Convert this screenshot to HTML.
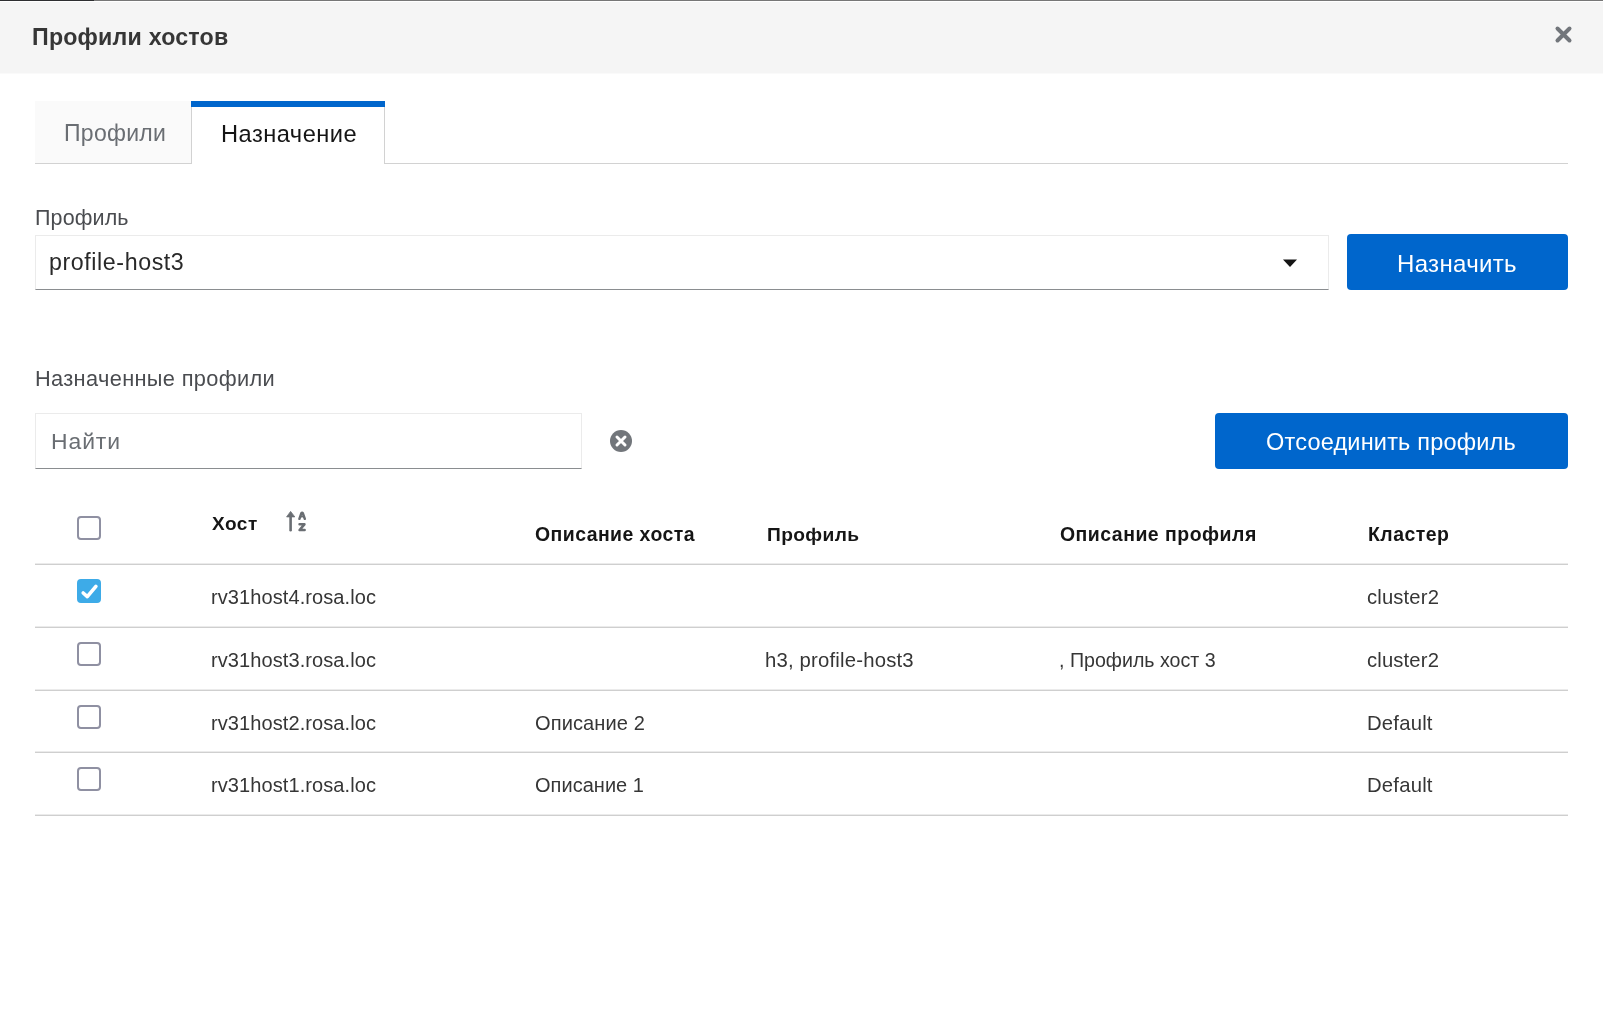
<!DOCTYPE html>
<html><head><meta charset="utf-8">
<style>
html,body{margin:0;padding:0;background:#fff;width:1603px;height:1034px;overflow:hidden;}
body{position:relative;font-family:"Liberation Sans",sans-serif;}
.a{position:absolute;box-sizing:border-box;}
.t{position:absolute;white-space:nowrap;line-height:1.117;will-change:transform;}
.hl{position:absolute;left:35px;width:1533px;height:1px;background:#cfcfcf;box-shadow:0 -1px 0 #ebebeb;}
.cb{position:absolute;left:77px;width:24px;height:24px;box-sizing:border-box;border:2px solid #8f90a2;border-radius:4px;background:#fff;}
</style></head><body>
<!-- top line -->
<div class="a" style="left:0;top:0;width:94px;height:1px;background:#2e2f31"></div>
<div class="a" style="left:94px;top:0;width:1509px;height:1px;background:#777"></div>
<!-- header -->
<div class="a" style="left:0;top:2px;width:1603px;height:71px;background:#f5f5f5"></div>
<div class="a" style="left:0;top:73px;width:1603px;height:1px;background:#fafafa"></div>
<svg class="a" style="left:1553px;top:24px" width="21" height="21" viewBox="0 0 21 21">
  <path d="M4.5 4.5 L16.5 16.5 M16.5 4.5 L4.5 16.5" stroke="#72767b" stroke-width="4" stroke-linecap="round"/>
</svg>
<!-- tabs -->
<div class="a" style="left:35px;top:101px;width:157px;height:63px;background:#fafafa;border-right:1px solid #d2d2d2;border-bottom:1px solid #d2d2d2"></div>
<div class="a" style="left:191px;top:101px;width:194px;height:63px;background:#fff;border-left:1px solid #d2d2d2;border-right:1px solid #d2d2d2"></div>
<div class="a" style="left:191px;top:101px;width:194px;height:6px;background:#06c"></div>
<div class="a" style="left:384px;top:163px;width:1184px;height:1px;background:#d2d2d2"></div>
<!-- select -->
<div class="a" style="left:35px;top:235px;width:1294px;height:55px;border:1px solid #ebebeb;border-bottom:1px solid #8a8d90;background:#fff"></div>
<svg class="a" style="left:1282px;top:258px" width="16" height="11" viewBox="0 0 16 11">
  <path d="M1 1.5 L15 1.5 L8 9 Z" fill="#151515"/>
</svg>
<div class="a" style="left:1347px;top:234px;width:221px;height:56px;background:#06c;border-radius:4px"></div>
<!-- search -->
<div class="a" style="left:35px;top:413px;width:547px;height:56px;border:1px solid #ebebeb;border-bottom:1px solid #8a8d90;background:#fff"></div>
<svg class="a" style="left:609px;top:429px" width="24" height="24" viewBox="0 0 24 24">
  <circle cx="12" cy="12" r="11" fill="#72767b"/>
  <path d="M8 8 L16 16 M16 8 L8 16" stroke="#fff" stroke-width="3" stroke-linecap="round"/>
</svg>
<div class="a" style="left:1215px;top:413px;width:353px;height:56px;background:#06c;border-radius:4px"></div>
<!-- table -->
<div class="cb" style="top:516px"></div>
<svg class="a" style="left:280px;top:506px" width="32" height="30" viewBox="0 0 32 30">
  <path d="M6.6 10.9 L10.6 5.4 L14.8 10.9 Z" fill="#6a6e73" stroke="#6a6e73" stroke-width="0.8" stroke-linejoin="round"/>
  <path d="M10.6 10 L10.6 24.2" stroke="#6a6e73" stroke-width="2.6" stroke-linecap="round"/>
  <path d="M19.4 12.8 L21.4 7.2 Q22.1 6.1 22.8 7.2 L24.8 12.8" stroke="#6a6e73" stroke-width="2.5" fill="none" stroke-linecap="round" stroke-linejoin="round"/>
  <path d="M20.2 11.2 Q22.1 9.6 24 11.2" stroke="#6a6e73" stroke-width="1.6" fill="none"/>
  <path d="M19.6 18.3 L24.4 18.3 L19.6 24 L24.6 24" stroke="#6a6e73" stroke-width="2.6" fill="none" stroke-linecap="round" stroke-linejoin="round"/>
</svg>
<div class="hl" style="top:564px"></div>
<div class="hl" style="top:627px"></div>
<div class="hl" style="top:690px"></div>
<div class="hl" style="top:752px"></div>
<div class="hl" style="top:815px"></div>
<div class="cb" style="top:579px;background:#3dabe8;border-color:#3dabe8"></div>
<svg class="a" style="left:77px;top:579px" width="24" height="24" viewBox="0 0 24 24">
  <path d="M6.2 14 L10.3 17.6 L18.9 7.4" stroke="#fff" stroke-width="3.6" fill="none" stroke-linecap="round" stroke-linejoin="round"/>
</svg>
<div class="cb" style="top:642px"></div>
<div class="cb" style="top:705px"></div>
<div class="cb" style="top:767px"></div>
<div class="t" style="left:32.31px;top:24.99px;font-size:23.21px;letter-spacing:0.199px;font-weight:bold;color:#363636">Профили хостов</div>
<div class="t" style="left:63.66px;top:121.38px;font-size:23.01px;letter-spacing:0.287px;font-weight:normal;color:#6a6e73">Профили</div>
<div class="t" style="left:221.11px;top:121.17px;font-size:23.67px;letter-spacing:0.468px;font-weight:normal;color:#151515">Назначение</div>
<div class="t" style="left:35.08px;top:205.95px;font-size:21.49px;letter-spacing:0.136px;font-weight:normal;color:#4a4c50">Профиль</div>
<div class="t" style="left:49.41px;top:250.49px;font-size:23.21px;letter-spacing:0.591px;font-weight:normal;color:#292929">profile-host3</div>
<div class="t" style="left:1396.78px;top:250.65px;font-size:24.04px;letter-spacing:0.318px;font-weight:normal;color:#ffffff">Назначить</div>
<div class="t" style="left:34.66px;top:366.88px;font-size:21.79px;letter-spacing:0.345px;font-weight:normal;color:#4a4c50">Назначенные профили</div>
<div class="t" style="left:50.76px;top:429.04px;font-size:22.94px;letter-spacing:0.909px;font-weight:normal;color:#6a6e73">Найти</div>
<div class="t" style="left:1266.46px;top:428.71px;font-size:23.53px;letter-spacing:0.190px;font-weight:normal;color:#ffffff">Отсоединить профиль</div>
<div class="t" style="left:211.70px;top:512.80px;font-size:19.01px;letter-spacing:0.537px;font-weight:bold;color:#151515">Хост</div>
<div class="t" style="left:535.12px;top:523.61px;font-size:19.44px;letter-spacing:0.449px;font-weight:bold;color:#151515">Описание хоста</div>
<div class="t" style="left:766.65px;top:523.84px;font-size:19.19px;letter-spacing:0.371px;font-weight:bold;color:#151515">Профиль</div>
<div class="t" style="left:1059.72px;top:523.58px;font-size:19.47px;letter-spacing:0.493px;font-weight:bold;color:#151515">Описание профиля</div>
<div class="t" style="left:1367.83px;top:523.60px;font-size:19.44px;letter-spacing:0.484px;font-weight:bold;color:#151515">Кластер</div>
<div class="t" style="left:211.10px;top:586.25px;font-size:20.05px;letter-spacing:0.073px;font-weight:normal;color:#363636">rv31host4.rosa.loc</div>
<div class="t" style="left:1367.49px;top:586.09px;font-size:20.23px;letter-spacing:0.160px;font-weight:normal;color:#363636">cluster2</div>
<div class="t" style="left:211.10px;top:649.15px;font-size:20.05px;letter-spacing:0.073px;font-weight:normal;color:#363636">rv31host3.rosa.loc</div>
<div class="t" style="left:765.08px;top:648.91px;font-size:20.32px;letter-spacing:0.185px;font-weight:normal;color:#363636">h3, profile-host3</div>
<div class="t" style="left:1058.93px;top:649.54px;font-size:19.63px;letter-spacing:0.000px;font-weight:normal;color:#363636">, Профиль хост 3</div>
<div class="t" style="left:1367.49px;top:648.99px;font-size:20.23px;letter-spacing:0.160px;font-weight:normal;color:#363636">cluster2</div>
<div class="t" style="left:211.10px;top:712.35px;font-size:20.05px;letter-spacing:0.073px;font-weight:normal;color:#363636">rv31host2.rosa.loc</div>
<div class="t" style="left:534.90px;top:712.34px;font-size:20.06px;letter-spacing:0.098px;font-weight:normal;color:#363636">Описание 2</div>
<div class="t" style="left:1366.68px;top:712.12px;font-size:20.30px;letter-spacing:0.208px;font-weight:normal;color:#363636">Default</div>
<div class="t" style="left:211.10px;top:774.15px;font-size:20.05px;letter-spacing:0.073px;font-weight:normal;color:#363636">rv31host1.rosa.loc</div>
<div class="t" style="left:534.90px;top:774.22px;font-size:19.98px;letter-spacing:0.048px;font-weight:normal;color:#363636">Описание 1</div>
<div class="t" style="left:1366.68px;top:773.92px;font-size:20.30px;letter-spacing:0.208px;font-weight:normal;color:#363636">Default</div>
</body></html>
